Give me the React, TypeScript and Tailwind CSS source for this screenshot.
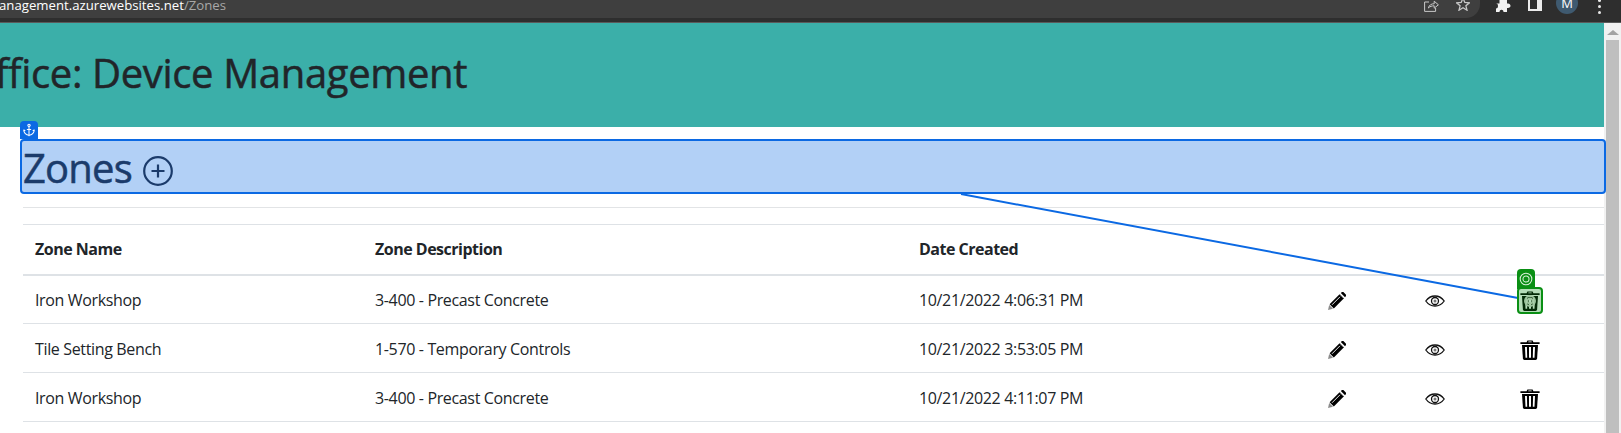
import { Anchor } from "lucide-react";

const rows = [
  { name: "Iron Workshop", desc: "3-400 - Precast Concrete", date: "10/21/2022 4:06:31 PM" },
  { name: "Tile Setting Bench", desc: "1-570 - Temporary Controls", date: "10/21/2022 3:53:05 PM" },
  { name: "Iron Workshop", desc: "3-400 - Precast Concrete", date: "10/21/2022 4:11:07 PM" },
];

function TrashIcon() {
  return (
    <svg width="20" height="20" viewBox="0 0 20 20" fill="#000">
      <path d="M6.600 2.200 7.400.4h5.200l.8 1.800H19.600v1.800H.4V2.200h6.200zm1.600 0h3.600l-.3-.6H8.500l-.3.6z" />
      <path d="M2 5h16l-.9 13.600c-.1.900-.7 1.400-1.500 1.400H4.400c-.8 0-1.400-.5-1.500-1.400L2 5z" />
      <path fill="#fff" d="M5 7h1.900l.3 10.800H5.500L5 7zm4 0h2v10.800H9V7zm4.100 0H15l-.5 10.800h-1.700L13.100 7z" />
    </svg>
  );
}

function PencilIcon() {
  return (
    <svg width="18" height="18" viewBox="0 0 18 18" fill="#000">
      <path fill="#8a8a8a" d="M0 18l1.200-5 3.800 3.800L0 18z" />
      <path d="M1.600 12.200 11.800 2l4.200 4.200L5.800 16.400 1.600 12.200z" />
      <path d="M12.800 1 14 0c.6-.3 1.100-.2 1.600.2l2.200 2.200c.4.500.5 1 .2 1.600l-1 1.200-4.200-4.200z" />
      <path stroke="#fff" strokeWidth="0.900" d="M4 12.800 12 4.800M11.800 2.200l4 4" />
    </svg>
  );
}

function EyeIcon() {
  return (
    <svg width="20" height="12" viewBox="0 0 20 12" fill="none" stroke="#111">
      <path strokeWidth="1.300" d="M.8 6C3.200 2.600 6.400 1 10 1s6.800 1.600 9.200 5c-2.400 3.400-5.600 5-9.200 5S3.200 9.400.8 6z" />
      <circle cx="10" cy="6" r="3.500" strokeWidth="1.300" />
      <circle cx="10" cy="6" r="1.500" fill="#777" stroke="none" />
    </svg>
  );
}

function TargetIcon({ size, color, weight = 0.9 }: { size: number; color: string; weight?: number }) {
  return (
    <svg width={size} height={size} viewBox="0 0 12 12" fill="none" stroke={color} strokeWidth={weight}>
      <circle cx="6" cy="6" r="5" />
      <circle cx="6" cy="6" r="2.600" />
    </svg>
  );
}

export default function App() {
  return (
    <div className="relative w-[1621px] h-[433px] overflow-hidden bg-white text-[#212529] font-['Open_Sans',sans-serif]">
      {/* browser bar */}
      <div className="h-[23px] bg-[#2e2e2e] border-b border-[#5a5a5a] flex items-start">
        <div className="w-[1480px] h-[18px] bg-[#3f3f3f] rounded-br-[14px] relative overflow-hidden">
          <div className="text-[13.200px] leading-[16px] -mt-[3px] text-white whitespace-nowrap -ml-[1px]">
            anagement.azurewebsites.net<span className="text-[#a8a8a8]">/Zones</span>
          </div>
          <div className="absolute left-[1424px] top-0 flex items-start gap-[17px]">
            <svg width="15" height="12" viewBox="0 0 15 12" fill="none" stroke="#c8c8c8" strokeWidth="1">
              <path d="M5 2H.6v9.400h11V8M4.400 8c.6-2.800 3-4.400 5.800-4.200V1.200L14.400 4.800l-4.200 3.400V5.800C8 5.800 5.800 6.400 4.400 8z" />
            </svg>
            <svg width="14" height="11" viewBox="0 0 14 11" fill="none" stroke="#c8c8c8" strokeWidth="1.300">
              <path d="M7-2 8.800 2.500l4.600.3-3.500 3 1.100 4.400L7 7.800 3 10.200l1.100-4.400-3.500-3 4.600-.3L7-2z" />
            </svg>
          </div>
        </div>
        <div className="flex-1 flex items-start">
          <svg width="15" height="12" viewBox="0 0 15 12" fill="#f2f2f2" className="ml-[16px]">
            <path d="M0 3.500h3.500V0h7.500v3.500h1c1.500 0 2.500 1 2.500 2.300S13.500 8 12 8h-1v4H7.500c0-1.400-1-2.200-2-2.200s-2 .8-2 2.200H0V8.500c1.200 0 2-.8 2-2.500S1.200 3.500 0 3.500z" />
          </svg>
          <div className="ml-[17px] w-[14px] h-[11px] bg-[#ececec] pb-[2px] pl-[2px] pr-[5px]">
            <div className="h-full bg-[#2e2e2e]" />
          </div>
          <div className="ml-[14px] -mt-[8px] w-[22px] h-[22px] rounded-full bg-[#3f5a70] flex items-center justify-center text-[13px] leading-none text-white">M</div>
          <div className="ml-[20px] flex flex-col gap-[3px] -mt-[1px]">
            <span className="w-[3px] h-[3px] rounded-full bg-[#e8e8e8]" />
            <span className="w-[3px] h-[3px] rounded-full bg-[#e8e8e8]" />
            <span className="w-[3px] h-[3px] rounded-full bg-[#e8e8e8]" />
          </div>
        </div>
      </div>

      <div className="flex h-[410px]">
        <div className="w-[1604px] shrink-0">
          {/* page header */}
          <div className="h-[104px] bg-[#3bafa9] flex items-center overflow-hidden">
            <h1 className="text-[40px] leading-[48px] font-medium tracking-[-0.350px] whitespace-nowrap -ml-[5px] -mt-[4px] [-webkit-text-stroke:0.500px_#212529]">
              ffice: Device Management
            </h1>
          </div>

          {/* zones heading */}
          <div className="relative mt-[12px] ml-[20px] mr-[-2px] h-[55px] bg-[#b2d0f6] border-2 border-[#0b69e3] rounded-[4px] text-[#1b3b6b] flex items-center gap-[11px] pl-[1px] z-10">
            <h2 className="text-[40px] leading-[48px] font-medium tracking-[-0.800px] mt-[3px] [-webkit-text-stroke:0.500px_#1b3b6b]">Zones</h2>
            <svg width="30" height="30" viewBox="0 0 30 30" fill="none" stroke="#1b3b6b" strokeWidth="2.200" className="mt-[9px]">
              <circle cx="15" cy="15" r="13.800" />
              <path d="M15 8.500v13M8.500 15h13" />
            </svg>
            <div className="absolute -left-[2px] -top-[20px] w-[18px] h-[18px] bg-[#0b69e3] rounded-t-[4px] flex items-center justify-center">
              <Anchor size={14} color="#fff" strokeWidth={1.800} />
            </div>
          </div>

          <div className="ml-[23px] mt-[13px] border-t border-[#e2e4e6] h-[17px]" />

          <table className="ml-[23px] w-[1581px] table-fixed border-t border-[#dee2e6] text-[16px]">
            <colgroup>
              <col className="w-[340px]" />
              <col className="w-[544px]" />
              <col className="w-[385px]" />
              <col className="w-[95px]" />
              <col className="w-[95px]" />
              <col />
            </colgroup>
            <thead>
              <tr className="h-[50px] border-b-2 border-[#dee2e6]">
                <th className="px-3 text-left font-bold tracking-[-0.500px]">Zone Name</th>
                <th className="px-3 text-left font-bold tracking-[-0.500px]">Zone Description</th>
                <th className="px-3 text-left font-bold tracking-[-0.500px]">Date Created</th>
                <th />
                <th />
                <th />
              </tr>
            </thead>
            <tbody className="tracking-[-0.350px]">
              {rows.map((r, i) => (
                <tr key={i} className="h-[49px] border-b border-[#dee2e6]">
                  <td className="px-3 pt-[2px]">{r.name}</td>
                  <td className="px-3 pt-[2px]">{r.desc}</td>
                  <td className="px-3 pt-[2px]">{r.date}</td>
                  <td>
                    <div className="w-[95px] pt-[4px] pr-[6px] flex justify-center">
                      <PencilIcon />
                    </div>
                  </td>
                  <td>
                    <div className="w-[95px] pt-[4px] flex justify-center">
                      <EyeIcon />
                    </div>
                  </td>
                  <td>
                    <div className="w-[96px] pt-[4px] flex justify-center">
                      <TrashIcon />
                    </div>
                  </td>
                </tr>
              ))}
            </tbody>
          </table>
        </div>

        {/* scrollbar */}
        <div className="flex-1 bg-[#f1f1f1] flex flex-col pl-[2px]">
          <div className="mt-[7px] ml-[1px] w-0 h-0 border-x-[6px] border-x-transparent border-b-[5px] border-b-[#a3a3a3]" />
          <div className="mt-[5px] w-[13px] flex-1 bg-[#bfbfbf]" />
        </div>
      </div>

      {/* annotation overlay */}
      <svg className="absolute left-0 top-0 z-20 pointer-events-none" width="1621" height="433" fill="none">
        <line x1="961" y1="194" x2="1518" y2="298" stroke="#0b69e3" strokeWidth="2" />
      </svg>
      <div className="absolute left-[1517px] top-[269px] z-20 w-[18px] h-[20px] bg-[#0a8f14] rounded-t-[4px] flex items-center justify-center">
        <TargetIcon size={14} color="#d8f0d8" />
      </div>
      <div className="absolute left-[1517px] top-[287px] z-20 w-[26px] h-[27px] border-[2px] border-[#0a8f14] bg-[#0a8f14]/30 rounded-[4px] flex items-center justify-center">
        <TargetIcon size={12} color="#9cc49c" weight={2} />
      </div>
    </div>
  );
}
